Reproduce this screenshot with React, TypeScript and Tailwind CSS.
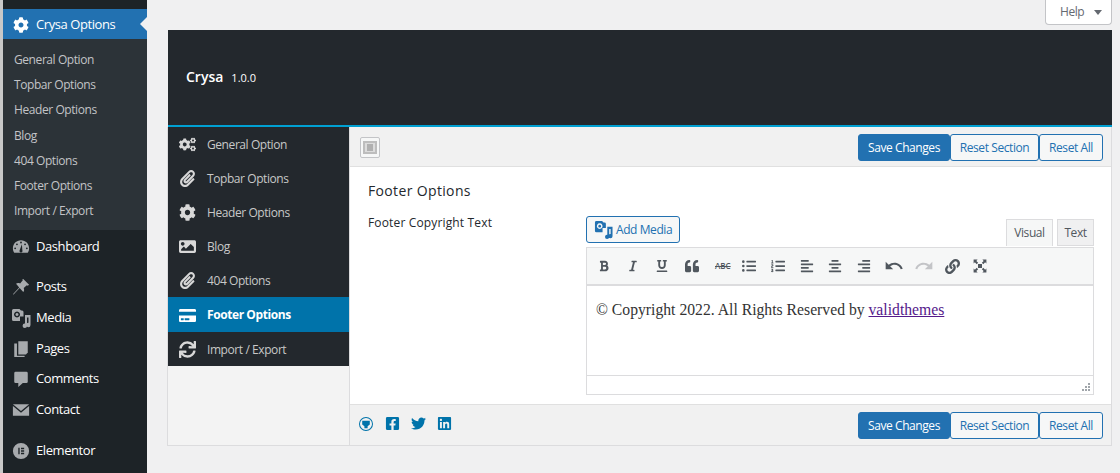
import React from "react";
import { FaCog, FaCogs, FaPaperclip, FaImage, FaCreditCard, FaSync, FaFacebookSquare, FaTwitter, FaLinkedin, FaBold, FaItalic, FaUnderline, FaQuoteLeft, FaListUl, FaListOl, FaAlignLeft, FaAlignCenter, FaAlignRight, FaLink } from "react-icons/fa";
import { MdUndo, MdRedo } from "react-icons/md";

const sans = "font-['Open_Sans','Noto_Sans',sans-serif] tracking-[-0.42px]";

function MediaIcon({ className = "" }: { className?: string }) {
  return (
    <svg viewBox="0 0 20 20" className={className} fill="currentColor">
      <path fillRule="evenodd" d="M2.500 1h6l1.500 1.500h1A1.500 1.500 0 0 1 12.500 4v4.500h-3.500V13H2.500A1.500 1.500 0 0 1 1 11.500v-9A1.500 1.500 0 0 1 2.500 1zM6 3.500a3 3 0 1 0 .01 0z" />
      <path d="M6 5a1.500 1.500 0 1 1-.01 0z" />
      <path d="M14 7h5.500v10a2.200 2.200 0 1 1-2-2.200V9.500H16v8.300a2.200 2.200 0 1 1-2-2.200z" />
    </svg>
  );
}
function Dash({ className = "" }: { className?: string }) {
  return (
    <svg viewBox="0 0 20 20" className={className} fill="currentColor">
      <path fillRule="evenodd" d="M10 2.500C4.700 2.500 1 6.500 1 11.500c0 2 .5 3.500 1.500 5h15c1-1.500 1.500-3 1.500-5 0-5-3.700-9-9-9zM10 4a1 1 0 1 1 0 2 1 1 0 0 1 0-2zM5.500 6a1 1 0 1 1 0 2 1 1 0 0 1 0-2zM14.500 6a1 1 0 1 1 0 2 1 1 0 0 1 0-2zM3.500 10.500a1 1 0 1 1 0 2 1 1 0 0 1 0-2zM16.500 10.500a1 1 0 1 1 0 2 1 1 0 0 1 0-2zM11 7l.5 6.500a1.700 1.700 0 1 1-3 0z" />
    </svg>
  );
}
function Pin({ className = "" }: { className?: string }) {
  return (
    <svg viewBox="0 0 20 20" className={className} fill="currentColor">
      <path d="M12.500 1l6.500 6.500-1.500 1-1-.5-3.500 3c.8 2 .5 3.500-.5 4.500L8.500 11 2 18l-1 .5L1.500 17.500 8 10.500 4.500 6.500C5.500 5.500 7 5.300 9 6l3-3.500-.5-1z" />
    </svg>
  );
}
function Pages({ className = "" }: { className?: string }) {
  return (
    <svg viewBox="0 0 20 20" className={className} fill="currentColor">
      <path d="M7 1.500h10.500V14L15.500 16H7z" />
      <path d="M5.500 4v13.500H14V19H2.500V4z" />
    </svg>
  );
}
function Comment({ className = "" }: { className?: string }) {
  return (
    <svg viewBox="0 0 20 20" className={className} fill="currentColor">
      <path d="M4 2h12a1.500 1.500 0 0 1 1.500 1.500V13a1.500 1.500 0 0 1-1.500 1.500h-4L7 19v-4.500H4A1.500 1.500 0 0 1 2.500 13V3.500A1.500 1.500 0 0 1 4 2z" />
    </svg>
  );
}
function Mail({ className = "" }: { className?: string }) {
  return (
    <svg viewBox="0 0 20 20" className={className} fill="currentColor">
      <path d="M1 3.500h18L10 11z" />
      <path d="M1 5.500l9 7.500 9-7.500V16.500H1z" />
    </svg>
  );
}
function Elementor({ className = "" }: { className?: string }) {
  return (
    <svg viewBox="0 0 20 20" className={className} fill="currentColor">
      <path fillRule="evenodd" d="M10 1a9 9 0 1 0 0 18 9 9 0 0 0 0-18zM7 6.500h1.500v7H7zM10 6.500h3.500V8H10zM10 9.250h3.500v1.500H10zM10 12h3.500v1.500H10z" />
    </svg>
  );
}
function Expand({ className = "" }: { className?: string }) {
  return (
    <svg viewBox="0 0 20 20" className={className} fill="currentColor">
      <path d="M2 2h5L5.400 3.600l2.300 2.300-1.800 1.800-2.300-2.300L2 7zM18 2v5l-1.600-1.600-2.300 2.300-1.800-1.800 2.300-2.300L13 2zM2 18v-5l1.600 1.600 2.300-2.300 1.800 1.800-2.300 2.300L7 18zM18 18h-5l1.600-1.600-2.300-2.300 1.800-1.800 2.300 2.300L18 13z" />
      <rect x="7.500" y="7.500" width="5" height="5" />
    </svg>
  );
}
function LayoutIcon() {
  return (
    <span className="flex h-[21px] w-[20px] items-center justify-center rounded-[2px] border border-[#c3c4c7] bg-[#f6f7f7]">
      <svg viewBox="0 0 14 13" className="h-[13px] w-[14px]">
        <path d="M0 0h14v13H0z" fill="#bdbdbd" />
        <path d="M2 2h10v9H2z" fill="#dcdcdc" />
        <path d="M4 3h6v7H4z" fill="#b0b0b0" />
      </svg>
    </span>
  );
}
function Globe() {
  return (
    <svg viewBox="0 0 14 14" className="h-[14px] w-[14px] text-[#0073aa]" fill="currentColor">
      <path fillRule="evenodd" d="M7 0a7 7 0 1 0 0 14A7 7 0 0 0 7 0zm0 1a6 6 0 1 1 0 12A6 6 0 0 1 7 1z" />
      <path d="M3.200 3.800h7.600v3.800L8.600 9.200v2.100H5.400V9.200L3.200 7.600z" />
    </svg>
  );
}

const subs = ["General Option", "Topbar Options", "Header Options", "Blog", "404 Options", "Footer Options", "Import / Export"];

function Item({ icon: I, label, cls, iconCls = "h-[18px] w-[18px]" }: { icon: any; label: string; cls: string; iconCls?: string }) {
  return (
    <div className={`flex items-center text-white text-[13px] ${cls}`}>
      <span className="flex w-[33px] justify-center pl-[3px] text-[#a7aaad]"><I className={iconCls} /></span>
      <span>{label}</span>
    </div>
  );
}

function Actions() {
  return (
    <div className="flex h-[27px] text-[12px]">
      <button className="w-[92px] rounded-[3px] border border-[#2271b1] bg-[#2271b1] pt-[1px] text-center text-white">Save Changes</button>
      <button className="w-[89px] rounded-[3px] border border-[#2271b1] bg-[#f6f7f7] pt-[1px] text-[#2271b1]">Reset Section</button>
      <button className="w-[64px] rounded-[3px] border border-[#2271b1] bg-[#f6f7f7] pt-[1px] text-[#2271b1]">Reset All</button>
    </div>
  );
}

const navs: [any, string, string, boolean?][] = [
  [FaCogs, "General Option", "h-[34px]"],
  [FaPaperclip, "Topbar Options", "h-[34px]"],
  [FaCog, "Header Options", "h-[34px]"],
  [FaImage, "Blog", "h-[34px]"],
  [FaPaperclip, "404 Options", "h-[34px]"],
  [FaCreditCard, "Footer Options", "h-[35px]", true],
  [FaSync, "Import / Export", "h-[34px]"],
];

const tools = [
  [FaBold, "h-[12px] w-[12px]"],
  [FaItalic, "h-[12px] w-[12px]"],
  [FaUnderline, "h-[12px] w-[12px]"],
  [FaQuoteLeft, "h-[14px] w-[14px]"],
];
const tools2 = [
  [FaListUl, "h-[14px] w-[14px]"],
  [FaListOl, "h-[14px] w-[14px]"],
  [FaAlignLeft, "h-[14px] w-[14px]"],
  [FaAlignCenter, "h-[14px] w-[14px]"],
  [FaAlignRight, "h-[14px] w-[14px]"],
];

export default function App() {
  return (
    <div className={`flex h-[473px] w-[1120px] overflow-hidden bg-[#f0f0f1] ${sans}`}>
      <div className="w-[3px] shrink-0 bg-[#c8c8c8]" />
      <aside className="flex w-[144px] shrink-0 flex-col bg-[#1d2327]">
        <div className="relative mt-[9px] flex h-[30px] items-center bg-[#2271b1] pt-[1px] text-[13px] text-white">
          <span className="flex w-[33px] justify-center pl-[3px]"><FaCog className="h-[16px] w-[16px]" /></span>
          <span>Crysa Options</span>
          <span className="absolute right-0 top-[8px] h-0 w-0 border-y-[7px] border-r-[7px] border-y-transparent border-r-[#f0f0f1]" />
        </div>
        <div className="flex h-[191px] flex-col bg-[#2c3338] pt-[8px] text-[12px] text-[#c3c4c7]">
          {subs.map((s) => (
            <div key={s} className="flex h-[25.300px] items-center pl-[11px]">{s}</div>
          ))}
        </div>
        <div className="h-[1px]" />
        <Item icon={Dash} label="Dashboard" cls="h-[32px]" />
        <div className="h-[8px]" />
        <Item icon={Pin} label="Posts" cls="h-[31px]" />
        <Item icon={MediaIcon} label="Media" cls="h-[31px]" iconCls="h-[20px] w-[20px]" />
        <Item icon={Pages} label="Pages" cls="h-[31px]" />
        <Item icon={Comment} label="Comments" cls="h-[30px]" />
        <Item icon={Mail} label="Contact" cls="h-[31px]" />
        <div className="h-[10px]" />
        <Item icon={Elementor} label="Elementor" cls="h-[31px]" />
      </aside>
      <main className="flex min-w-0 flex-1 flex-col pl-[21px] pr-[8px]">
        <div className="flex h-[30px] justify-end">
          <div className="flex h-[25px] w-[67px] items-center rounded-b-[4px] border border-t-0 border-[#c3c4c7] bg-white pl-[14px] text-[12px] text-[#646970]">
            Help
            <span className="ml-[10px] h-0 w-0 border-x-[4px] border-t-[5px] border-x-transparent border-t-[#646970]" />
          </div>
        </div>
        <div className="flex h-[97px] flex-col justify-center border-b-2 border-[#00a0d2] bg-[#23282d] pb-[2px] pl-[18px] tracking-normal text-white">
          <div className="flex items-baseline gap-[8px]">
            <span className="text-[14px] font-semibold">Crysa</span>
            <span className="text-[11px]">1.0.0</span>
          </div>
        </div>
        <div className="-ml-[1px] flex h-[319px] border border-t-0 border-[#dcdcde] bg-[#f3f3f3]">
          <nav className="w-[182px] shrink-0 border-r border-[#dcdcde]">
            {navs.map(([I, label, h, active]) => (
              <div key={label} className={`flex items-center pt-[1px] text-[12px] ${h} ${active ? "bg-[#0073aa] font-bold text-white" : "bg-[#23282d] text-[#c8c8c8]"}`}>
                <span className={`flex w-[39px] justify-center ${active ? "text-white" : "text-[#d8d8d8]"}`}><I className="h-[17px] w-[17px]" /></span>
                <span>{label}</span>
              </div>
            ))}
          </nav>
          <div className="flex min-w-0 flex-1 flex-col">
            <div className="flex h-[40px] items-center justify-between border-b border-[#e0e0e0] bg-[#f1f1f1] pl-[10px] pr-[8px] pt-[1px]">
              <LayoutIcon />
              <Actions />
            </div>
            <div className="flex flex-1 flex-col bg-white pl-[18px] pr-[17px]">
              <h2 className="mt-[13px] text-[14px] font-medium tracking-[0.35px] text-[#23282d]">Footer Options</h2>
              <div className="mt-[5px] flex">
                <div className="w-[218px] pt-[8px] text-[12px] font-medium tracking-[0.15px] text-[#23282d]">Footer Copyright Text</div>
                <div className="flex-1">
                  <div className="flex items-start justify-between pt-[10px]">
                    <button className="flex h-[27px] w-[94px] items-center gap-[3px] rounded-[3px] border border-[#2271b1] bg-[#f6f7f7] pl-[7px] text-[12px] text-[#2271b1]">
                      <MediaIcon className="h-[19px] w-[19px]" />Add Media
                    </button>
                    <div className="mt-[3px] flex gap-[4px] text-[12px] text-[#50575e]">
                      <div className="flex h-[27px] w-[47px] items-center justify-center border border-b-0 border-[#dcdcde] bg-[#f6f7f7]">Visual</div>
                      <div className="flex h-[27px] w-[37px] items-center justify-center border border-[#dcdcde] bg-[#f0f0f1]">Text</div>
                    </div>
                  </div>
                  <div className="mt-[1px] border border-[#dcdcde]">
                    <div className="flex h-[38px] items-center border-b-2 border-[#dcdcde] bg-[#f6f7f7] pl-[12px] text-[#50575e]">
                      {tools.map(([I, c], i) => {
                        const Ic = I as any;
                        return <span key={i} className="-ml-[1px] flex w-[30px] shrink-0 items-center"><Ic className={c as string} /></span>;
                      })}
                      <span className="w-[27px] text-[8px] font-semibold tracking-normal line-through">ABC</span>
                      {tools2.map(([I, c], i) => {
                        const Ic = I as any;
                        return <span key={i} className="flex w-[28.800px] shrink-0 items-center"><Ic className={c as string} /></span>;
                      })}
                      <MdUndo className="-ml-[2px] h-[20px] w-[20px]" />
                      <MdRedo className="ml-[10px] h-[20px] w-[20px] text-[#c3c4c7]" />
                      <FaLink className="ml-[11px] h-[15px] w-[15px]" />
                      <Expand className="ml-[12px] h-[16px] w-[16px]" />
                    </div>
                    <div className="h-[89px] pl-[9px] pt-[12px] font-['Liberation_Serif',serif] text-[15.700px] tracking-normal text-[#333]">
                      © Copyright 2022. All Rights Reserved by <a className="text-[#551a8b] underline">validthemes</a>
                    </div>
                    <div className="relative h-[19px] border-t border-[#dcdcde]">
                      <svg viewBox="0 0 8 8" className="absolute right-[3px] bottom-[3px] h-[8px] w-[8px] text-[#a0a5aa]" fill="currentColor">
                        <path d="M6 0h2v2H6zM3 3h2v2H3zM6 3h2v2H6zM0 6h2v2H0zM3 6h2v2H3zM6 6h2v2H6z" />
                      </svg>
                    </div>
                  </div>
                </div>
              </div>
            </div>
            <div className="flex h-[41px] items-center justify-between border-t border-[#e0e0e0] bg-[#f1f1f1] pl-[9px] pr-[8px]">
              <div className="mb-[3px] flex items-center gap-[12px]">
                <Globe />
                <FaFacebookSquare className="h-[15px] w-[15px] text-[#0073aa]" />
                <FaTwitter className="-ml-[1px] h-[15px] w-[15px] text-[#0073aa]" />
                <FaLinkedin className="-ml-[1px] h-[15px] w-[15px] text-[#0073aa]" />
              </div>
              <Actions />
            </div>
          </div>
        </div>
      </main>
    </div>
  );
}
